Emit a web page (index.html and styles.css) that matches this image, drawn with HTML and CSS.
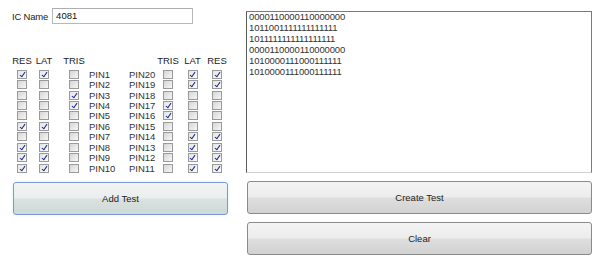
FILE: index.html
```html
<!DOCTYPE html>
<html>
	<head>
		<title>IC Tester</title>
		<link rel="stylesheet" href="styles.css">
	</head>

	<body>
		<div id="left">
			<div class="nameRow">
				<span class="label">IC Name</span>
				<div class="field">4081</div>
			</div>

			<div id="pins">
				<span class="head">RES</span><span class="head">LAT</span><span class="head">TRIS</span><span></span><span></span><span class="head">TRIS</span><span class="head">LAT</span><span class="head">RES</span>

				<span class="cb on"></span><span class="cb on"></span><span class="cb"></span><span class="pin pinL">PIN1</span><span class="pin">PIN20</span><span class="cb"></span><span class="cb on"></span><span class="cb on"></span>
				<span class="cb"></span><span class="cb"></span><span class="cb"></span><span class="pin pinL">PIN2</span><span class="pin">PIN19</span><span class="cb"></span><span class="cb on"></span><span class="cb on"></span>
				<span class="cb"></span><span class="cb"></span><span class="cb on"></span><span class="pin pinL">PIN3</span><span class="pin">PIN18</span><span class="cb"></span><span class="cb"></span><span class="cb"></span>
				<span class="cb"></span><span class="cb"></span><span class="cb on"></span><span class="pin pinL">PIN4</span><span class="pin">PIN17</span><span class="cb on"></span><span class="cb"></span><span class="cb"></span>
				<span class="cb"></span><span class="cb"></span><span class="cb"></span><span class="pin pinL">PIN5</span><span class="pin">PIN16</span><span class="cb on"></span><span class="cb"></span><span class="cb"></span>
				<span class="cb on"></span><span class="cb on"></span><span class="cb"></span><span class="pin pinL">PIN6</span><span class="pin">PIN15</span><span class="cb"></span><span class="cb"></span><span class="cb"></span>
				<span class="cb"></span><span class="cb"></span><span class="cb"></span><span class="pin pinL">PIN7</span><span class="pin">PIN14</span><span class="cb"></span><span class="cb on"></span><span class="cb on"></span>
				<span class="cb on"></span><span class="cb on"></span><span class="cb"></span><span class="pin pinL">PIN8</span><span class="pin">PIN13</span><span class="cb"></span><span class="cb on"></span><span class="cb on"></span>
				<span class="cb on"></span><span class="cb on"></span><span class="cb"></span><span class="pin pinL">PIN9</span><span class="pin">PIN12</span><span class="cb"></span><span class="cb on"></span><span class="cb on"></span>
				<span class="cb on"></span><span class="cb on"></span><span class="cb"></span><span class="pin pinL">PIN10</span><span class="pin">PIN11</span><span class="cb"></span><span class="cb on"></span><span class="cb on"></span>
			</div>

			<button class="btn focused">Add Test</button>
		</div>

		<div id="right">
			<div id="output">0000110000110000000
1011001111111111111
1011111111111111111
0000110000110000000
1010000111000111111
1010000111000111111</div>
			<button class="btn">Create Test</button>
			<button class="btn">Clear</button>
		</div>
	</body>
</html>
```

FILE: styles.css
```css
body {
	margin: 0;
	padding: 8px 8px 0 12px;
	display: flex;
	gap: 18px;
	background: white;
	font-family: "Liberation Sans", Arial, sans-serif;
	font-size: 9.5px;
	color: #222;
	overflow: hidden;
}

#left {
	width: 217px;
	display: flex;
	flex-direction: column;
}

.nameRow {
	display: flex;
	align-items: center;
	gap: 4px;
	height: 16px;
}

.label {
	letter-spacing: -0.2px;
}

.field {
	width: 136px;
	height: 14px;
	line-height: 14px;
	padding-left: 3px;
	border: 1px solid #b5b8bf;
	border-top-color: #abadb3;
	color: #111;
}

#pins {
	display: grid;
	grid-template-columns: 20px 24px 36px 37px 29px 20px 29px 20px;
	grid-template-rows: 15px repeat(10, 10.45px);
	align-items: center;
	justify-items: center;
	margin-top: 30px;
}

.head {
	align-self: start;
	padding-top: 1px;
}

.pin {
	justify-self: start;
	color: #333;
}

.pinL {
	margin-left: -3px;
}

.cb {
	position: relative;
	box-sizing: border-box;
	width: 10px;
	height: 9px;
	border: 1px solid #9a9a9a;
	background: linear-gradient(135deg, #d6d6d6, #f6f6f6);
}

.cb.on {
	background: linear-gradient(135deg, #e4e4e4, #fbfbfb);
}

.cb.on::after {
	content: "";
	position: absolute;
	left: 2.5px;
	top: 0;
	width: 2px;
	height: 5px;
	border: solid #1d2c8a;
	border-width: 0 1.6px 1.6px 0;
	transform: rotate(35deg);
}

.btn {
	box-sizing: border-box;
	height: 33px;
	border: 1px solid #8a8a8a;
	border-radius: 3px;
	background: linear-gradient(#f4f4f4 0%, #ececec 48%, #dedede 52%, #d2d2d2 100%);
	font-family: "Liberation Sans", Arial, sans-serif;
	font-size: 9.5px;
	color: #222;
	padding: 0;
}

.focused {
	margin-top: 9px;
	margin-left: 1px;
	width: 215px;
	border-color: #7f97cf;
	background: linear-gradient(#f3f4f4 0%, #ebeeee 48%, #dbe1e0 52%, #cddad6 100%);
	box-shadow: 0 0 0 1.5px #eefcfc;
}

#right {
	width: 346px;
	display: flex;
	flex-direction: column;
	padding-top: 3px;
}

#output {
	box-sizing: border-box;
	height: 162px;
	padding: 0 2px;
	border: 1px solid #7a7a7a;
	border-left-color: #5a5a5a;
	border-bottom-color: #d0d0d0;
	white-space: pre;
	line-height: 10.9px;
	letter-spacing: -0.15px;
	color: #333;
	margin-bottom: 8px;
}

#right .btn {
	margin-left: 1px;
	width: 345px;
	margin-bottom: 8px;
}
```
